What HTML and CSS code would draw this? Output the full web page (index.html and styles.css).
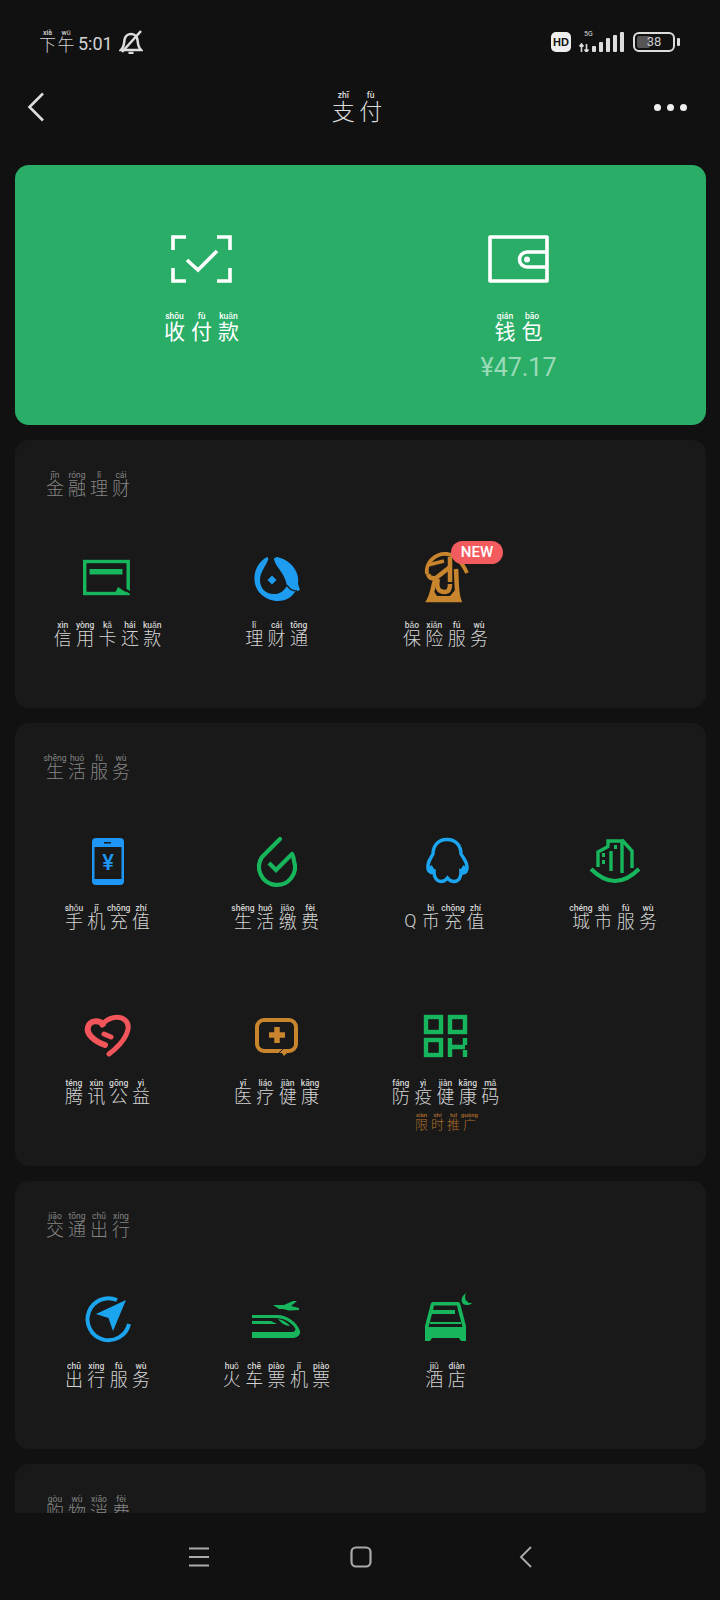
FILE: index.html
```html
<!DOCTYPE html>
<html lang="zh-CN">
<head>
<meta charset="UTF-8">
<title>支付</title>
<link rel="stylesheet" href="styles.css">
</head>
<body>
<div class="phone">

  <div class="status">
    <div class="status-left">
      <span class="clock"><ruby>下<rt>xià</rt></ruby><ruby>午<rt>wǔ</rt></ruby><span class="digits">5:01</span></span>
      <svg class="bell" viewBox="0 0 24 24" fill="none" stroke="#ddd" stroke-width="2.500">
        <path d="M2 20 H22 C19 17 19 14 18.500 10 C18 6 15 4 12 4 C9 4 6 6 5.500 10 C5 14 5 17 2 20 Z"/>
        <path d="M9.500 23 H14.500"/>
        <path d="M3 22 L22 1" stroke-width="2.600"/>
      </svg>
    </div>
    <div class="status-right">
      <span class="hd">HD</span>
      <div class="signal">
        <span class="five-g">5G</span>
        <svg class="bars" viewBox="0 0 46 20" fill="#ddd">
          <path d="M2.500 20 V12 M0.500 14.500 L2.500 12 L4.500 14.500 M7.500 12 V20 M5.500 17.500 L7.500 20 L9.500 17.500" stroke="#ddd" stroke-width="1.600" fill="none"/>
          <rect x="13" y="14" width="4" height="6" rx="1"/>
          <rect x="20" y="10" width="4" height="10" rx="1"/>
          <rect x="27" y="6" width="4" height="14" rx="1"/>
          <rect x="34" y="3" width="4" height="17" rx="1"/>
          <rect x="41" y="0" width="4" height="20" rx="1"/>
        </svg>
      </div>
      <div class="battery">
        <div class="battery-body">
          <div class="battery-fill" style="width: 38%"></div>
          <span class="battery-num">38</span>
        </div>
        <div class="battery-nub"></div>
      </div>
    </div>
  </div>

  <div class="topbar">
    <svg class="back" viewBox="0 0 18 30" fill="none" stroke="#ddd" stroke-width="2.600"><path d="M16 1.500 L2.500 15 L16 28.500"/></svg>
    <h1 class="page-title"><ruby>支<rt>zhī</rt></ruby><ruby>付<rt>fù</rt></ruby></h1>
    <div class="more"><i></i><i></i><i></i></div>
  </div>

  <div class="content">

    <div class="hero">
      <div class="hero-item">
        <svg class="hero-icon" viewBox="0 0 61 48" fill="none" stroke="#fff" stroke-width="3.600">
          <path d="M15 2 H2 V15 M46 2 H59 V15 M15 46 H2 V33 M46 46 H59 V33"/>
          <path d="M16 25 L27 35 L46 16"/>
        </svg>
        <div class="hero-label"><ruby>收<rt>shōu</rt></ruby><ruby>付<rt>fù</rt></ruby><ruby>款<rt>kuǎn</rt></ruby></div>
      </div>
      <div class="hero-item">
        <svg class="hero-icon" viewBox="0 0 61 48" fill="none" stroke="#fff" stroke-width="3.600">
          <rect x="2" y="2" width="57" height="44" stroke-linejoin="round"/>
          <path d="M59 17 H39 A7.500 7.500 0 0 0 39 32 H59"/>
          <circle cx="39" cy="24.500" r="3" fill="#fff" stroke="none"/>
        </svg>
        <div class="hero-label"><ruby>钱<rt>qián</rt></ruby><ruby>包<rt>bāo</rt></ruby></div>
        <div class="balance">¥47.17</div>
      </div>
    </div>

    <section class="card">
      <h2 class="card-title"><ruby>金<rt>jīn</rt></ruby><ruby>融<rt>róng</rt></ruby><ruby>理<rt>lǐ</rt></ruby><ruby>财<rt>cái</rt></ruby></h2>
      <div class="grid">
        <div class="item">
          <svg class="icon" viewBox="0 0 48 48">
            <rect x="0.700" y="7.500" width="43.500" height="32" fill="none" stroke="#17b65c" stroke-width="3.400"/>
            <rect x="5.500" y="15" width="33" height="5.500" fill="#17b65c"/>
            <path d="M34 33 L46 41 H30 Z" fill="#17b65c"/>
            <path d="M34 31 L47 39" stroke="#191919" stroke-width="2.500"/>
          </svg>
          <div class="label"><ruby>信<rt>xìn</rt></ruby><ruby>用<rt>yòng</rt></ruby><ruby>卡<rt>kǎ</rt></ruby><ruby>还<rt>hái</rt></ruby><ruby>款<rt>kuǎn</rt></ruby></div>
        </div>
        <div class="item">
          <svg class="icon" viewBox="0 0 48 48">
            <path d="M14 3 C5 8 1 17 1.500 26 C2 38 13 47 25 47 C32 47 38 44 42 38 L47 36 L45 30 C47 18 38 6 24 3 L17 6 Z" fill="#1e9cf0"/>
            <path d="M17 -1 H22 L21 4 C21 12 32 18 34 32 C30 38 26 40 22 40 C14 41 7 35 7 26 C7 18 13 12 15 6 Z" fill="#191919"/>
            <path d="M19 21.500 L23.500 26 L19 30.500 L14.500 26 Z" fill="#1e9cf0"/>
            <path d="M34 31 C36 35 39 37 44 37" fill="none" stroke="#191919" stroke-width="1.500"/>
          </svg>
          <div class="label"><ruby>理<rt>lǐ</rt></ruby><ruby>财<rt>cái</rt></ruby><ruby>通<rt>tōng</rt></ruby></div>
        </div>
        <div class="item">
          <svg class="icon" viewBox="0 0 48 48" fill="none" stroke="#c9842e" stroke-width="4.500">
            <path d="M5 20 C3 8 14 -1 25 0 C34 1 40 8 45 19" stroke-width="3.800"/>
            <path d="M6 11 L22 7" stroke-width="3.400"/>
            <path d="M28 3 V28"/>
            <path d="M28 13 L14 24"/>
            <path d="M6 20 C7 24 10 25 14 24"/>
            <path d="M14 24 C11 30 11 39 7 46 H37 C34 38 35 28 34 15"/>
            <path d="M16 25 C14 33 16 38 23 38 C27 38 28 34 28 30"/>
            <path d="M7 46 C9 43 10 40 11 36 L15 42 H28 L34 35 L37 46 Z" fill="#c9842e" stroke="none"/>
          </svg>
          <span class="badge">NEW</span>
          <div class="label"><ruby>保<rt>bǎo</rt></ruby><ruby>险<rt>xiǎn</rt></ruby><ruby>服<rt>fú</rt></ruby><ruby>务<rt>wù</rt></ruby></div>
        </div>
      </div>
    </section>

    <section class="card">
      <h2 class="card-title"><ruby>生<rt>shēng</rt></ruby><ruby>活<rt>huó</rt></ruby><ruby>服<rt>fú</rt></ruby><ruby>务<rt>wù</rt></ruby></h2>
      <div class="grid">
        <div class="item">
          <svg class="icon" viewBox="0 0 48 48">
            <rect x="8" y="1" width="32" height="47" rx="4" fill="#1e96f5"/>
            <rect x="10.500" y="10" width="27" height="32" fill="#191919"/>
            <rect x="20" y="5" width="7" height="1.500" fill="#191919"/>
            <text class="yen" x="24" y="33" text-anchor="middle">¥</text>
          </svg>
          <div class="label"><ruby>手<rt>shǒu</rt></ruby><ruby>机<rt>jī</rt></ruby><ruby>充<rt>chōng</rt></ruby><ruby>值<rt>zhí</rt></ruby></div>
        </div>
        <div class="item">
          <svg class="icon" viewBox="0 0 48 48" fill="none" stroke="#17b65c" stroke-width="4.200" stroke-linecap="round">
            <path d="M27 2 L9 20 A18 18 0 1 0 41 24 C41 21 40 19 39 17"/>
            <path d="M16 26 L23 33 L38 18" stroke-linecap="butt"/>
          </svg>
          <div class="label"><ruby>生<rt>shēng</rt></ruby><ruby>活<rt>huó</rt></ruby><ruby>缴<rt>jiǎo</rt></ruby><ruby>费<rt>fèi</rt></ruby></div>
        </div>
        <div class="item">
          <svg class="icon" viewBox="0 0 48 48" fill="none" stroke="#1ca5ef" stroke-width="3.400">
            <path d="M25 2.500 C15 2.500 11 10 11 17 C8 22 5 26 6 32 C7 36 10 36 12 35 C12 39 14 44.500 19 44.500 C22 44.500 24 43 25.500 41 C27 43 29 44.500 32 44.500 C37 44.500 39 40 39 35 C41 37 44 36 45 32 C46 26 42 22 39 17 C39 10 35 2.500 25 2.500 Z"/>
            <path d="M8 29 C9 32 11 34 13 35 M43 29 C42 32 40 34 38 35" stroke-width="4"/>
          </svg>
          <div class="label"><span class="latin">Q</span><ruby>币<rt>bì</rt></ruby><ruby>充<rt>chōng</rt></ruby><ruby>值<rt>zhí</rt></ruby></div>
        </div>
        <div class="item">
          <svg class="icon" viewBox="0 0 48 48" fill="none" stroke="#17b65c" stroke-width="3.400">
            <path d="M0 32 Q24 56 48 32" stroke-width="4"/>
            <path d="M7 30 V15 L18 9"/>
            <path d="M17 9 V4 H31 V36"/>
            <path d="M31 3 L41 14 V31"/>
            <path d="M20 14 V34"/>
            <path d="M11 18 H14 M11 25 H14 M23 10 H26" stroke-width="4"/>
          </svg>
          <div class="label"><ruby>城<rt>chéng</rt></ruby><ruby>市<rt>shì</rt></ruby><ruby>服<rt>fú</rt></ruby><ruby>务<rt>wù</rt></ruby></div>
        </div>
        <div class="item">
          <svg class="icon" viewBox="0 0 48 48" fill="none" stroke="#f2555a" stroke-width="6" stroke-linecap="round">
            <path d="M21 33 C10 29 2 22 4 15 C6 8 15 8 19 12"/>
            <path d="M18 13 C24 5 35 3 41 8 C49 15 41 30 25 42" stroke-width="5"/>
            <path d="M20 22 L27 25" stroke-width="5"/>
          </svg>
          <div class="label"><ruby>腾<rt>téng</rt></ruby><ruby>讯<rt>xùn</rt></ruby><ruby>公<rt>gōng</rt></ruby><ruby>益<rt>yì</rt></ruby></div>
        </div>
        <div class="item">
          <svg class="icon" viewBox="0 0 48 48">
            <rect x="4" y="8" width="39" height="31" rx="7" fill="none" stroke="#c9842e" stroke-width="4"/>
            <path d="M26 37 H38 L31 44 Z" fill="#c9842e"/>
            <path d="M32 35 L26 41" stroke="#191919" stroke-width="1"/>
            <path d="M24 15 V31 M16 23 H32" stroke="#c9842e" stroke-width="5.500"/>
          </svg>
          <div class="label"><ruby>医<rt>yī</rt></ruby><ruby>疗<rt>liáo</rt></ruby><ruby>健<rt>jiàn</rt></ruby><ruby>康<rt>kāng</rt></ruby></div>
        </div>
        <div class="item">
          <svg class="icon" viewBox="0 0 48 48" fill="none" stroke="#17b65c" stroke-width="4.400">
            <rect x="4" y="5" width="15" height="15"/>
            <rect x="28" y="5" width="15" height="15"/>
            <rect x="4" y="28" width="15" height="15"/>
            <path d="M28 26 V45 M28 35 H43 M43 26 V33 M43 38 V45"/>
          </svg>
          <div class="label"><ruby>防<rt>fáng</rt></ruby><ruby>疫<rt>yì</rt></ruby><ruby>健<rt>jiàn</rt></ruby><ruby>康<rt>kāng</rt></ruby><ruby>码<rt>mǎ</rt></ruby></div>
          <div class="promo"><ruby>限<rt>xiàn</rt></ruby><ruby>时<rt>shí</rt></ruby><ruby>推<rt>tuī</rt></ruby><ruby>广<rt>guǎng</rt></ruby></div>
        </div>
      </div>
    </section>

    <section class="card">
      <h2 class="card-title"><ruby>交<rt>jiāo</rt></ruby><ruby>通<rt>tōng</rt></ruby><ruby>出<rt>chū</rt></ruby><ruby>行<rt>xíng</rt></ruby></h2>
      <div class="grid">
        <div class="item">
          <svg class="icon" viewBox="0 0 48 48">
            <path d="M33 5 A21 21 0 1 0 45 29" fill="none" stroke="#1ca5ef" stroke-width="4"/>
            <path d="M42 5 L12 19 L24.500 23 L29 36 Z" fill="#1ca5ef"/>
          </svg>
          <div class="label"><ruby>出<rt>chū</rt></ruby><ruby>行<rt>xíng</rt></ruby><ruby>服<rt>fú</rt></ruby><ruby>务<rt>wù</rt></ruby></div>
        </div>
        <div class="item">
          <svg class="icon" viewBox="0 0 48 48" fill="#17b65c">
            <path d="M20 10 H31 L40 6 H44 L38 11 L46 13 V15 L36 15.500 L30 14 L26 14 Z"/>
            <path d="M-1 20 H24 C34 20 44 27 47 36 C47.500 39 46 42 41 43 H-1 V37 H39 C42 37 43 35 42 33 C38 27 31 23 22 23 H-1 Z"/>
            <path d="M-1 26 H18 L24 29 H-1 Z"/>
            <path d="M25 24 C30 25 35 28 37 31 C32 31 28 28 25 24 Z"/>
          </svg>
          <div class="label"><ruby>火<rt>huǒ</rt></ruby><ruby>车<rt>chē</rt></ruby><ruby>票<rt>piào</rt></ruby><ruby>机<rt>jī</rt></ruby><ruby>票<rt>piào</rt></ruby></div>
        </div>
        <div class="item">
          <svg class="icon" viewBox="0 0 48 48">
            <path d="M11 7 H36 Q38 7 38.500 10 L44 31 V46 H39 L37 43 H10 L8 46 H3 V31 L8.500 10 Q9 7 11 7 Z" fill="#17b65c"/>
            <path d="M12 10.500 H35 L36 15 H11 Z" fill="#191919"/>
            <path d="M33 15 H36 L40.500 32 H6.500 L10 19 H33 Z" fill="#191919"/>
            <path d="M8 27 H39 V29 H8 Z" fill="#17b65c"/>
            <path d="M44 -2 C38 2 38 10 45 10 C47 10 49 9.500 50 8 C46 8.500 41 5 44 -2 Z" fill="#17b65c"/>
          </svg>
          <div class="label"><ruby>酒<rt>jiǔ</rt></ruby><ruby>店<rt>diàn</rt></ruby></div>
        </div>
      </div>
    </section>

    <section class="card">
      <h2 class="card-title"><ruby>购<rt>gòu</rt></ruby><ruby>物<rt>wù</rt></ruby><ruby>消<rt>xiāo</rt></ruby><ruby>费<rt>fèi</rt></ruby></h2>
    </section>

  </div>

  <div class="navbar">
    <svg class="nav-menu" viewBox="0 0 20 20" stroke="#aaa" stroke-width="2"><path d="M0 1.500 H20 M0 10 H20 M0 18.500 H20"/></svg>
    <svg class="nav-home" viewBox="0 0 22 22" fill="none" stroke="#aaa" stroke-width="2.200"><rect x="1.500" y="1.500" width="19" height="19" rx="4.500"/></svg>
    <svg class="nav-back" viewBox="0 0 13 22" fill="none" stroke="#aaa" stroke-width="1.900"><path d="M12 1 L2 11 L12 21"/></svg>
  </div>

</div>
</body>
</html>
```

FILE: styles.css
```css
html, body {
	margin: 0;
	padding: 0;
	background: #111;
}
body {
	font-family: "Noto Sans CJK SC", "Noto Sans", sans-serif;
	font-weight: 300;
	color: #d4d4d4;
}
.phone {
	display: flex;
	flex-direction: column;
	width: 720px;
	height: 1600px;
	overflow: hidden;
}

/* pinyin over the characters, it must not push them apart */
ruby {
	margin: 0 2.200px;
	line-height: 1;
}
rt {
	margin: 0 -6px -1px;
	font-family: Roboto, sans-serif;
	font-size: 8.500px;
	font-weight: 500;
	line-height: 1;
	letter-spacing: 0;
}

/* status bar */
.status {
	display: flex;
	flex: none;
	align-items: center;
	justify-content: space-between;
	height: 84px;
	padding: 0 40px 0 39px;
}
.status-left, .status-right {
	display: flex;
	align-items: center;
}
.clock {
	display: flex;
	align-items: flex-end;
	margin-top: -3px;
	font-size: 17px;
	color: #d4d4d4;
}
.clock ruby {
	margin: 0 1.500px 0 0;
}
.clock rt {
	font-size: 7px;
}
.digits {
	margin-left: 2px;
	font-family: Roboto, sans-serif;
	font-size: 18px;
	font-weight: 400;
	line-height: 17px;
}
.bell {
	width: 24px;
	height: 24px;
	margin-left: 6px;
}
.hd {
	width: 20px;
	height: 20px;
	border-radius: 5px;
	background: #eee;
	font-family: "Liberation Sans", sans-serif;
	font-size: 11px;
	font-weight: 700;
	line-height: 20px;
	text-align: center;
	color: #111;
}
.signal {
	position: relative;
	width: 46px;
	height: 20px;
	margin-left: 8px;
}
.five-g {
	position: absolute;
	top: -2px;
	left: 5px;
	font-family: Roboto, sans-serif;
	font-size: 7px;
	font-weight: 400;
	color: #ddd;
}
.bars {
	display: block;
	width: 46px;
	height: 20px;
}
.battery {
	display: flex;
	align-items: center;
	margin-left: 8px;
}
.battery-body {
	position: relative;
	box-sizing: border-box;
	width: 42px;
	height: 20px;
	padding: 2px;
	border: 2px solid #ddd;
	border-radius: 6px;
}
.battery-fill {
	height: 100%;
	border-radius: 2px;
	background: #555;
}
.battery-num {
	position: absolute;
	top: 0;
	left: 0;
	width: 38px;
	font-family: Roboto, sans-serif;
	font-size: 13px;
	font-weight: 400;
	line-height: 16px;
	text-align: center;
	color: #ccc;
}
.battery-nub {
	width: 3px;
	height: 8px;
	margin-left: 2px;
	border-radius: 1px;
	background: #ddd;
}

/* title bar */
.topbar {
	display: flex;
	flex: none;
	align-items: center;
	justify-content: space-between;
	height: 46px;
	margin-bottom: 35px;
	padding: 0 33px 0 27px;
}
.back {
	width: 18px;
	height: 30px;
}
.page-title {
	margin: 2px 0 0 15px;
	font-size: 23px;
	font-weight: 300;
	color: #ddd;
}
.more {
	display: flex;
	gap: 6px;
}
.more i {
	width: 7px;
	height: 7px;
	border-radius: 50%;
	background: #eee;
}

/* scroll area */
.content {
	flex: 1;
	min-height: 0;
	overflow: hidden;
	padding: 0 14px 0 15px;
}
.hero {
	display: grid;
	grid-template-columns: 317px 317px;
	box-sizing: border-box;
	height: 260px;
	padding: 70px 28px 0;
	border-radius: 14px;
	background: #2aae67;
	color: #fff;
}
.hero-item {
	display: flex;
	flex-direction: column;
	align-items: center;
}
.hero-icon {
	width: 61px;
	height: 48px;
}
.hero-label {
	margin-top: 28px;
	font-size: 21px;
	font-weight: 400;
}
.hero-label ruby {
	margin: 0 3px;
}
.balance {
	margin-top: 8px;
	font-family: Roboto, sans-serif;
	font-size: 25px;
	font-weight: 400;
	line-height: 30px;
	color: #9bdab8;
}

.card {
	box-sizing: border-box;
	margin-top: 15px;
	padding: 0 8px 15px;
	border-radius: 14px;
	background: #191919;
}
.card-title {
	box-sizing: border-box;
	height: 78px;
	margin: 0;
	padding: 34px 0 0 21px;
	font-size: 18px;
	font-weight: 300;
	color: #858585;
}
.card-title ruby {
	margin: 0 2px;
}
.card-title rt {
	font-weight: 400;
}
.grid {
	display: grid;
	grid-template-columns: repeat(4, 169px);
}
.item {
	position: relative;
	display: flex;
	flex-direction: column;
	align-items: center;
	height: 175px;
	padding-top: 36px;
	box-sizing: border-box;
}
.icon {
	flex: none;
	width: 48px;
	height: 48px;
	overflow: visible;
}
.yen {
	font-family: Roboto, sans-serif;
	font-size: 22px;
	font-weight: 500;
	fill: #1e96f5;
}
.label {
	display: flex;
	align-items: flex-end;
	margin-top: 18px;
	font-size: 18px;
	white-space: nowrap;
}
.latin {
	margin-right: 3px;
	font-family: Roboto, sans-serif;
	font-size: 18px;
	line-height: 17px;
}
.badge {
	position: absolute;
	top: 23px;
	left: 90px;
	width: 52px;
	height: 23px;
	border-radius: 12px;
	background: #f25c5f;
	font-family: Roboto, sans-serif;
	font-size: 15px;
	font-weight: 500;
	line-height: 23px;
	text-align: center;
	color: #fff;
}
.promo {
	margin-top: 7px;
	font-size: 13px;
	color: #b06f2a;
}
.promo ruby {
	margin: 0 1.500px;
}
.promo rt {
	font-size: 6px;
}

.navbar {
	display: flex;
	flex: none;
	align-items: center;
	justify-content: center;
	height: 87px;
	box-sizing: border-box;
	background: #111;
}
.nav-menu {
	width: 20px;
	height: 20px;
}
.nav-home {
	width: 22px;
	height: 22px;
	margin: 0 147px 0 141px;
}
.nav-back {
	width: 13px;
	height: 22px;
}
```
